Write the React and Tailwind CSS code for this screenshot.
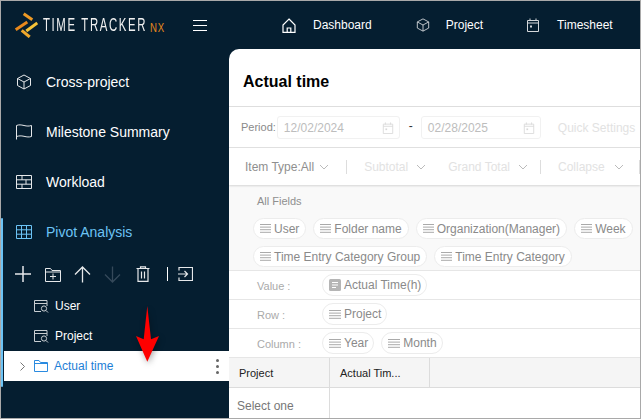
import React from "react";

const S = ({ w = 16, h = 16, vb = "0 0 16 16", className = "", sw = 1, children }) => (
  <svg width={w} height={h} viewBox={vb} fill="none" stroke="currentColor" strokeWidth={sw} className={"shrink-0 " + className}>{children}</svg>
);

const Cube = ({ s = 16, className = "" }) => (
  <S w={s} h={s} className={className}>
    <path d="M8 1 14.500 4.500V11.500L8 15 1.500 11.500V4.500Z" />
    <path d="M1.500 4.500 8 8 14.500 4.500M8 8V15" />
  </S>
);
const Home = () => (
  <S w={14} h={15} vb="0 0 14 15" sw={1.2}>
    <path d="M7 1 13 7V14.300H1V7ZM5.200 14.300V10H8.800V14.300" />
  </S>
);
const Cal = ({ className = "", s = 14 }) => (
  <S w={s} h={s} vb="0 0 14 14" className={className}>
    <path d="M1.500 2.500H12.500V13.500H1.500ZM1.500 5H12.500M4 .5V3M10 .5V3" />
    <rect x="4" y="7.500" width="2" height="2" fill="currentColor" stroke="none" />
  </S>
);
const Chev = ({ className = "" }) => (
  <S w={10} h={6} vb="0 0 10 6" className={className}><path d="M1 1 5 5 9 1" /></S>
);
const Lines = ({ w = 12 }) => (
  <svg width={w} height="9" viewBox={`0 0 ${w} 9`} className="shrink-0" fill="#aaa">
    <rect y="0" width={w} height="1" /><rect y="2.600" width={w} height="1" /><rect y="5.200" width={w} height="1" /><rect y="7.800" width={w} height="1" />
  </svg>
);
const Logo = () => (
  <svg width="24" height="26" viewBox="0 0 24 26" className="shrink-0" fill="none" strokeWidth="3" strokeLinecap="butt">
    <path d="M9.700 1.700 18.300 7.700" stroke="#ee9a25" />
    <path d="M1.700 17.700 13.300 10" stroke="#e8891c" />
    <path d="M12.300 19 23.300 11" stroke="#f5c238" />
    <path d="M7.700 18.300 15.700 25" stroke="#f0a82c" />
  </svg>
);

function Nav({ icon, label, active }) {
  return (
    <div className={"flex h-[50px] items-center pl-[15px] text-[14px] " + (active ? "text-[#6cc3f5]" : "text-white")}>
      <span className="flex w-[30px] items-center">{icon}</span>
      <span>{label}</span>
    </div>
  );
}

const TreeIcon = () => (
  <S w={15} h={13} vb="0 0 15 13" className="text-[#c9ced2]">
    <path d="M7 11.500H.5V.5H13V6M.5 3.500H13" />
    <circle cx="10" cy="8.500" r="2.600" /><path d="M12 10.500 14 12.500" />
  </S>
);

function Pill({ children, icon, tall }) {
  return (
    <span className={"flex items-center gap-[3px] rounded-full border border-[#ececec] bg-white pl-[6px] text-[12px] whitespace-nowrap text-[#8a8a8a] " + (tall ? "h-[22px] pr-[5px]" : "h-[21px] pr-[6px]")}>
      {icon || <Lines w={tall ? 12 : 11} />}
      <span>{children}</span>
    </span>
  );
}

function ZoneRow({ label, children }) {
  return (
    <div className="flex h-[29px] items-center border-b border-[#e6e6e6] pl-[28px]">
      <span className="w-[65px] pt-[2px] text-[11px] text-[#aaa]">{label}<span className="ml-[3px]">:</span></span>
      <div className="flex gap-[7px]">{children}</div>
    </div>
  );
}

const Sep = ({ className = "" }) => <span className={"h-[14px] w-px shrink-0 bg-[#ddd] " + className} />;

function DateBox({ v, className = "" }) {
  return (
    <div className={"flex h-[23px] items-center justify-between rounded-[3px] border border-[#f1f1f1] pl-[6px] pr-[5px] text-[12px] text-[#bdbdbd] " + className}>
      <span>{v}</span>
      <Cal className="text-[#d8d8d8]" s={12} />
    </div>
  );
}

export default function App() {
  return (
    <div className="relative h-[419px] w-[641px] overflow-hidden border border-[#a9a9a9] bg-[#051e30] font-['Liberation_Sans',Arial,sans-serif]">
      <header className="flex h-[48px] items-center text-white">
        <div className="flex w-[228px] items-center pl-[13px]">
          <Logo />
          <span className="ml-[5px] inline-block w-[103px] origin-left scale-x-[0.6] whitespace-nowrap text-[19px] leading-[26px] tracking-[2.700px] text-[#f0f0f0]">TIME TRACKER</span>
          <span className="ml-[4px] inline-block w-[14px] origin-left translate-y-[3px] scale-x-[0.8] text-[12px] tracking-[1px] text-[#e8891c]">NX</span>
          <span className="ml-[29px] flex h-[11px] w-[14px] flex-col justify-between">
            <span className="h-px bg-white" /><span className="h-px bg-white" /><span className="h-px bg-white" />
          </span>
        </div>
        <div className="flex items-center text-[12px]">
          <span className="ml-[53px]"><Home /></span>
          <span className="ml-[17px]">Dashboard</span>
          <span className="ml-[44px] text-[#d5d8db]"><Cube s={14} /></span>
          <span className="ml-[16px]">Project</span>
          <span className="ml-[43px] text-[#d5d8db]"><Cal /></span>
          <span className="ml-[17px]">Timesheet</span>
        </div>
      </header>

      <div className="flex h-[369px]">
        <aside className="relative w-[228px] shrink-0 pt-[8px]">
          <Nav icon={<Cube className="text-[#e6e8ea]" />} label="Cross-project" />
          <Nav label="Milestone Summary" icon={
            <S w={16} h={16} className="text-[#e6e8ea]"><path d="M.5 15.500V1.500C3 .5 5 .8 8 1.500S13 2.300 15.500 1.500V12.500C13 13.300 11 13 8 12.300S3 11.800.5 12.500" /></S>
          } />
          <Nav label="Workload" icon={
            <S w={16} h={14} vb="0 0 16 14" className="text-[#e6e8ea]"><path d="M.5.5H15.500V13.500H.5ZM.5 4.800H15.500M.5 9.200H15.500M6 .5V4.800M10 4.800V9.200M6 9.200V13.500" /></S>
          } />
          <Nav active label="Pivot Analysis" icon={
            <S w={16} h={14} vb="0 0 16 14"><path d="M.5.5H15.500V13.500H.5ZM.5 4.800H15.500M.5 9.200H15.500M5.500.5V13.500M10.500.5V13.500" /></S>
          } />

          <div className="flex h-[34px] items-center pl-[14px] text-[#e6e8ea]">
            <S w={16} h={16} sw={1.5}><path d="M8 0V16M0 8H16" /></S>
            <S w={16} h={15} vb="0 0 16 15" className="ml-[14px]"><path d="M.5 14.500V1.500H5.500L7 3.500H15.500V14.500ZM.5 5H15.500M8 6.500V12.500M5 9.500H11" /></S>
            <S w={17} h={17} vb="0 0 17 17" sw={1.3} className="ml-[13px]"><path d="M8.500 16.500V1M1 8.500 8.500 1 16 8.500" /></S>
            <S w={17} h={17} vb="0 0 17 17" sw={1.3} className="ml-[13px] text-[#35495a]"><path d="M8.500.5V16M1 8.500 8.500 16 16 8.500" /></S>
            <S w={14} h={16} vb="0 0 14 16" sw={1.2} className="ml-[15px]"><path d="M.5 2.500H13.500M4.500 2.500V.8H9.500V2.500M2 2.500V15.300H12V2.500M5.500 5.500V12.500M8.500 5.500V12.500" /></S>
            <span className="ml-[17px] h-[14px] w-px bg-white" />
            <S w={15} h={14} vb="0 0 15 14" sw={1.2} className="ml-[10px]"><path d="M1 3.500V.5H14.500V13.500H1V10.500M0 7H9M6.500 4 9.500 7 6.500 10" /></S>
          </div>

          <div className="flex h-[30px] items-center pl-[33px] text-[12px] text-white">
            <TreeIcon /><span className="ml-[6px]">User</span>
          </div>
          <div className="flex h-[30px] items-center pl-[33px] text-[12px] text-white">
            <TreeIcon /><span className="ml-[6px]">Project</span>
          </div>
          <div className="ml-[3px] flex h-[30px] items-center bg-white pl-[16px] text-[12px] text-[#1c7ed6]">
            <S w={5} h={9} vb="0 0 5 9" className="text-[#777]"><path d="M.5.5 4.500 4.500.5 8.500" /></S>
            <S w={14} h={12} vb="0 0 14 12" className="ml-[9px] text-[#2a8be0]"><path d="M.5 11.500V.5H5L6.500 2.500H13.500V11.500ZM.5 3.500H13.500" /></S>
            <span className="ml-[6px]">Actual time</span>
            <span className="ml-auto mr-[10px] flex flex-col gap-[3px]">
              <span className="size-[3px] rounded-full bg-[#666]" /><span className="size-[3px] rounded-full bg-[#666]" /><span className="size-[3px] rounded-full bg-[#666]" />
            </span>
          </div>

          <span className="absolute left-0 top-[169px] h-[169px] w-[2px] rounded-full bg-[#6cc3f5]" />
        </aside>

        <main className="min-w-0 flex-1 overflow-hidden rounded-tl-[10px] bg-white">
          <div className="flex h-[58px] items-center border-b border-[#dedede] pl-[14px] pt-[9px] text-[16px] font-bold text-black">Actual time</div>
          <div className="flex h-[41px] items-center border-b border-[#e2e2e2] pl-[12px] pt-[1px] whitespace-nowrap">
            <span className="text-[11px] text-[#8a8a8a]">Period:</span>
            <DateBox v="12/02/2024" className="ml-[1px] w-[123px]" />
            <span className="mb-[3px] ml-[9px] mr-[8px] text-[12px] text-[#333]">-</span>
            <DateBox v="02/28/2025" className="w-[120px]" />
            <span className="ml-[17px] text-[12px] text-[#e2e2e2]">Quick Settings</span>
          </div>
          <div className="relative flex h-[37px] items-center whitespace-nowrap pl-[16px] text-[12px] text-[#e2e2e2] shadow-[0_1px_2px_rgba(0,0,0,0.15)]">
            <span className="text-[#8f8f8f]">Item Type:All</span>
            <Chev className="ml-[5px] text-[#bbb]" />
            <Sep className="ml-[17px]" />
            <span className="ml-[17px]">Subtotal</span>
            <Chev className="ml-[8px] text-[#bbb]" />
            <span className="ml-[22px]">Grand Total</span>
            <Chev className="ml-[8px] text-[#bbb]" />
            <Sep className="ml-[12px]" />
            <span className="ml-[17px]">Collapse</span>
            <Chev className="ml-[9px] text-[#bbb]" />
            <Sep className="ml-[15px]" />
          </div>
          <div className="h-[86px] overflow-hidden border-b border-[#e6e6e6] bg-[#f9f9f9] pl-[24px] pt-[10px]">
            <div className="pl-[4px] text-[11px] leading-[13px] text-[#8f8f8f]">All Fields</div>
            <div className="mt-[10px] flex gap-[7px]">
              <Pill>User</Pill>
              <Pill>Folder name</Pill>
              <Pill>Organization(Manager)</Pill>
              <Pill>Week</Pill>
              <span className="h-[21px] w-[30px] shrink-0 rounded-full border border-[#ececec] bg-white" />
            </div>
            <div className="mt-[7px] flex gap-[7px]">
              <Pill>Time Entry Category Group</Pill>
              <Pill>Time Entry Category</Pill>
            </div>
          </div>
          <ZoneRow label="Value">
            <Pill tall icon={
              <svg width="12" height="12" viewBox="0 0 12 12" className="shrink-0"><rect width="12" height="12" rx="1.500" fill="#b5b5b5" /><path d="M3 3.500H9M3 6H9M3 8.500H7" stroke="#fff" /></svg>
            }>Actual Time(h)</Pill>
          </ZoneRow>
          <ZoneRow label="Row">
            <Pill tall>Project</Pill>
          </ZoneRow>
          <ZoneRow label="Column">
            <Pill tall>Year</Pill><Pill tall>Month</Pill>
          </ZoneRow>
          <div className="flex h-[30px] border-b border-[#dcdcdc] bg-[#f5f5f5] text-[11px] text-[#222]">
            <div className="flex w-[101px] items-center border-r border-[#dcdcdc] pl-[10px] pt-[1px]">Project</div>
            <div className="flex w-[100px] items-center border-r border-[#dcdcdc] pl-[10px] pt-[1px]">Actual Tim...</div>
          </div>
          <div className="flex h-[40px]">
            <div className="w-[101px] border-r border-[#dcdcdc] pl-[8px] pr-[30px] pt-[9px] text-[12px] leading-[18px] text-[#777]">Select one view</div>
          </div>
        </main>
      </div>

      <svg width="26" height="58" viewBox="0 0 26 58" className="absolute left-[134px] top-[304px]" style={{ filter: "drop-shadow(1px 2px 3px rgba(0,0,0,.35))" }}>
        <path d="M12.300 1 16 34.300 24 31 12.300 56.700 1 31 8.700 34.300Z" fill="#f00" />
      </svg>
    </div>
  );
}
